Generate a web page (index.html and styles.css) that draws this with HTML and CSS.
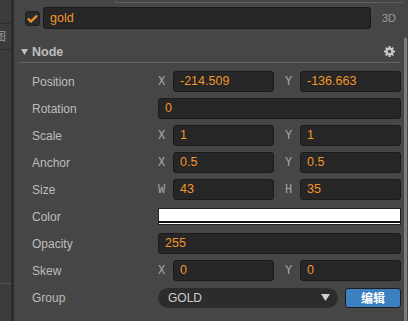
FILE: index.html
```html
<!DOCTYPE html>
<html lang="zh">
<head>
  <meta charset="UTF-8">
  <title>Inspector</title>
  <link rel="stylesheet" href="styles.css">
</head>
<body>
  <!-- 左侧被截断的面板 -->
  <div class="side">
    <div class="side-cell"></div>
    <div class="side-cell"><span class="side-glyph">图</span></div>
    <div class="side-fill"></div>
    <div class="side-cell last"></div>
  </div>

  <div class="main">
    <div class="topline"></div>

    <div class="name-row">
      <span class="check">
        <svg width="11" height="9" viewBox="0 0 11 9"><path d="M1 4.5 L4 7.5 L10 1.5" fill="none" stroke="#f4952a" stroke-width="2.2"/></svg>
      </span>
      <div class="input name">gold</div>
      <span class="tag">3D</span>
    </div>

    <div class="section">
      <svg class="fold" width="7" height="6" viewBox="0 0 7 6"><path d="M0 0 H7 L3.5 6 Z" fill="#bdbdbd"/></svg>
      <span class="section-title">Node</span>
      <svg class="gear" width="11" height="11" viewBox="0 0 11 11">
        <path d="M4.5 0 H6.5 V1.6 L7.6 2.1 L8.8 1 L10 2.2 L8.9 3.4 L9.4 4.5 H11 V6.5 H9.4 L8.9 7.6 L10 8.8 L8.8 10 L7.6 8.9 L6.5 9.4 V11 H4.5 V9.4 L3.4 8.9 L2.2 10 L1 8.8 L2.1 7.6 L1.6 6.5 H0 V4.5 H1.6 L2.1 3.4 L1 2.2 L2.2 1 L3.4 2.1 L4.5 1.6 Z" fill="#c8c8c8"/>
        <circle cx="5.5" cy="5.5" r="1.7" fill="#464646"/>
      </svg>
    </div>

    <div class="props">
      <div class="prop">
        <span class="label">Position</span>
        <div class="vec">
          <div class="axis"><span class="ax">X</span><div class="input">-214.509</div></div>
          <div class="axis"><span class="ax">Y</span><div class="input">-136.663</div></div>
        </div>
      </div>
      <div class="prop">
        <span class="label">Rotation</span>
        <div class="input">0</div>
      </div>
      <div class="prop">
        <span class="label">Scale</span>
        <div class="vec">
          <div class="axis"><span class="ax">X</span><div class="input">1</div></div>
          <div class="axis"><span class="ax">Y</span><div class="input">1</div></div>
        </div>
      </div>
      <div class="prop">
        <span class="label">Anchor</span>
        <div class="vec">
          <div class="axis"><span class="ax">X</span><div class="input">0.5</div></div>
          <div class="axis"><span class="ax">Y</span><div class="input">0.5</div></div>
        </div>
      </div>
      <div class="prop">
        <span class="label">Size</span>
        <div class="vec">
          <div class="axis"><span class="ax">W</span><div class="input">43</div></div>
          <div class="axis"><span class="ax">H</span><div class="input">35</div></div>
        </div>
      </div>
      <div class="prop">
        <span class="label">Color</span>
        <div class="color"></div>
      </div>
      <div class="prop">
        <span class="label">Opacity</span>
        <div class="input">255</div>
      </div>
      <div class="prop">
        <span class="label">Skew</span>
        <div class="vec">
          <div class="axis"><span class="ax">X</span><div class="input">0</div></div>
          <div class="axis"><span class="ax">Y</span><div class="input">0</div></div>
        </div>
      </div>
      <div class="prop">
        <span class="label">Group</span>
        <div class="group">
          <div class="select">
            <span>GOLD</span>
            <svg width="9" height="7" viewBox="0 0 9 7"><path d="M0 0 H9 L4.5 7 Z" fill="#cfcfcf"/></svg>
          </div>
          <button class="btn">编辑</button>
        </div>
      </div>
    </div>
  </div>

  <div class="scroll"><div class="thumb"></div></div>
</body>
</html>
```

FILE: styles.css
```css
body {
  margin: 0;
  width: 408px;
  height: 321px;
  overflow: hidden;
  display: flex;
  background: #464646;
  font-family: 'Liberation Sans', Arial, sans-serif;
  font-size: 12px;
  color: #bdbdbd;
}

/* 左侧面板 */
.side {
  width: 11px;
  flex: none;
  display: flex;
  flex-direction: column;
  background: #3b3b3b;
  border-right: 3px solid #2b2b2b;
  overflow: hidden;
}
.side-cell {
  height: 23px;
  border-bottom: 1px solid #2c2c2c;
  flex: none;
}
.side-cell + .side-cell {
  height: 25px;
}
.side-cell.last {
  height: 37px;
  border-top: 1px solid #555;
  border-bottom: none;
}
.side-fill {
  flex: 1;
}
.side-glyph {
  display: block;
  margin: 6px 0 0 -6px;
  font-family: 'Noto Sans CJK SC', sans-serif;
  font-size: 12px;
  line-height: 12px;
  color: #9a9a9a;
}

.main {
  flex: 1;
  display: flex;
  flex-direction: column;
}
.topline {
  height: 2px;
  margin-left: 101px;
  border-bottom: 1px solid #5e5e5e;
  border-left: 1px solid #5e5e5e;
  margin-right: -6px;
}

/* 名称行 */
.name-row {
  display: flex;
  align-items: center;
  height: 22px;
  margin-top: 4px;
  padding-left: 11px;
}
.check {
  width: 13px;
  height: 13px;
  border: 1px solid #1f1f1f;
  border-radius: 3px;
  background: #2b2b2b;
  display: flex;
  align-items: center;
  justify-content: center;
  margin-right: 3px;
}
.input {
  height: 19px;
  line-height: 19px;
  padding-left: 6px;
  background: #262626;
  border: 1px solid #1b1b1b;
  border-radius: 3px;
  color: #f4952a;
  font-size: 12.5px;
  overflow: hidden;
}
.name {
  width: 320px;
  height: 20px;
  line-height: 20px;
}
.tag {
  margin-left: 11px;
  font-size: 11px;
  color: #9b9b9b;
}

/* 标题 Node */
.section {
  display: flex;
  align-items: center;
  height: 21px;
  margin: 12px 2px 0 5px;
  padding-left: 2px;
  border-bottom: 1px solid #646464;
}
.fold {
  margin-right: 4px;
}
.section-title {
  flex: 1;
  font-weight: bold;
  font-size: 12.5px;
  color: #bdbdbd;
}
.gear {
  margin-right: 6px;
}

/* 属性列表 */
.props {
  margin: 5px 2px 0 5px;
}
.prop {
  display: grid;
  grid-template-columns: 139px 1fr;
  align-items: center;
  height: 27px;
}
.label {
  padding-left: 13px;
  color: #bdbdbd;
}
.vec {
  display: grid;
  grid-template-columns: 1fr 1fr;
  column-gap: 11px;
}
.axis {
  display: flex;
  align-items: center;
}
.axis .input {
  flex: 1;
}
.ax {
  width: 15px;
  flex: none;
  font-family: 'Liberation Mono', 'DejaVu Sans Mono', monospace;
  font-size: 12px;
  color: #a8a8a8;
}

.color {
  height: 15px;
  border: 1px solid #222;
  background: linear-gradient(#fff 0 12px, #111 12px 14px, #fff 14px);
}

.group {
  display: flex;
  align-items: center;
}
.select {
  width: 162px;
  height: 20px;
  display: flex;
  align-items: center;
  justify-content: space-between;
  padding: 0 8px 0 10px;
  background: #2c2c2c;
  border-radius: 10px;
  color: #cfcfcf;
  font-size: 12px;
}
.btn {
  margin-left: 7px;
  width: 56px;
  height: 20px;
  padding: 0;
  background: #3d80c2;
  border: 1px solid #1d1d1d;
  border-radius: 3px;
  color: #fff;
  font-family: 'Noto Sans CJK SC', sans-serif;
  font-size: 12px;
  font-weight: bold;
  line-height: 17px;
}

/* 滚动条 */
.scroll {
  width: 5px;
  flex: none;
  padding-top: 38px;
  background: #464646;
}
.thumb {
  width: 3px;
  height: 100%;
  margin-left: 1px;
  background: #7c7c7c;
}
```
